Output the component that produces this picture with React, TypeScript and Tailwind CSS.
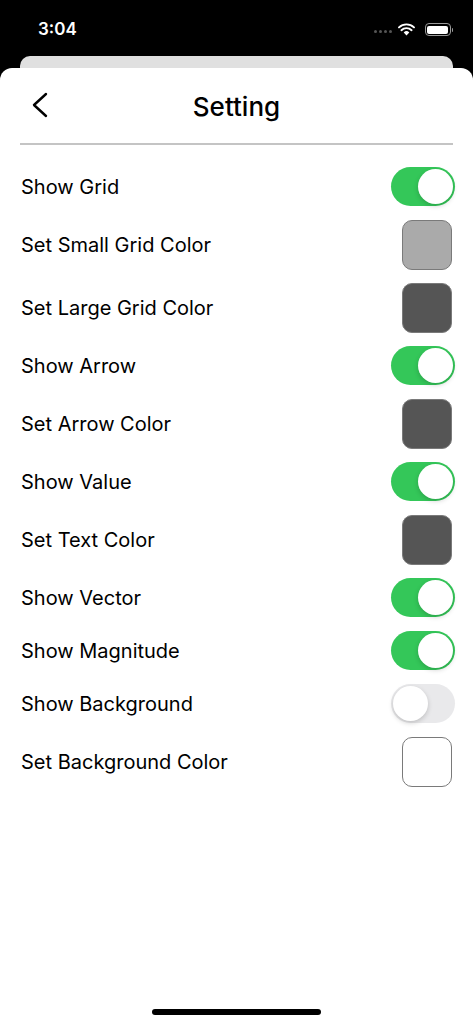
import { useState } from "react";

type Row =
  | { kind: "toggle"; label: string; on: boolean }
  | { kind: "color"; label: string; color: string };

const rows: Row[] = [
  { kind: "toggle", label: "Show Grid", on: true },
  { kind: "color", label: "Set Small Grid Color", color: "bg-[#aaaaaa]" },
  { kind: "color", label: "Set Large Grid Color", color: "bg-[#555555]" },
  { kind: "toggle", label: "Show Arrow", on: true },
  { kind: "color", label: "Set Arrow Color", color: "bg-[#555555]" },
  { kind: "toggle", label: "Show Value", on: true },
  { kind: "color", label: "Set Text Color", color: "bg-[#555555]" },
  { kind: "toggle", label: "Show Vector", on: true },
  { kind: "toggle", label: "Show Magnitude", on: true },
  { kind: "toggle", label: "Show Background", on: false },
  { kind: "color", label: "Set Background Color", color: "bg-white" },
];

const Toggle = ({ on }: { on: boolean }) => {
  const [value, setValue] = useState(on);
  return (
    <button
      onClick={() => setValue(!value)}
      className={`flex h-[39px] w-[64px] items-center rounded-full p-[2px] ${
        value ? "justify-end bg-[#34c759]" : "justify-start bg-[#e9e9eb]"
      }`}
    >
      <span className="h-[35px] w-[35px] rounded-full bg-white shadow-[0_2px_5px_rgba(0,0,0,0.18)]" />
    </button>
  );
};

const StatusBar = () => (
  <div className="flex h-[56px] items-center justify-between bg-black pl-[38px] pr-[20px] pt-[3px]">
    <span className="text-[17px] font-semibold text-white">3:04</span>
    <div className="flex items-center gap-[6px]">
      <div className="flex items-end gap-[2px] pt-[4px]">
        <span className="h-[3px] w-[3px] rounded-full bg-[#555]" />
        <span className="h-[3px] w-[3px] rounded-full bg-[#555]" />
        <span className="h-[3px] w-[3px] rounded-full bg-[#555]" />
        <span className="h-[3px] w-[3px] rounded-full bg-[#555]" />
      </div>
      <svg width="17" height="13" viewBox="0 0 17 13">
        <path d="M8.5 12.5 L5.7 9.4 A4 4 0 0 1 11.3 9.4 Z" fill="white" />
        <path d="M3.4 7.2 A7.3 7.3 0 0 1 13.6 7.2" stroke="white" strokeWidth="1.9" fill="none" strokeLinecap="round" />
        <path d="M1 4.4 A10.8 10.8 0 0 1 16 4.4" stroke="white" strokeWidth="1.9" fill="none" strokeLinecap="round" />
      </svg>
      <div className="ml-[4px] flex items-center gap-[1px]">
        <div className="flex h-[13px] w-[26px] items-center rounded-[4px] border border-[#999] p-[1.5px]">
          <div className="h-full w-full rounded-[2px] bg-white" />
        </div>
        <div className="h-[4px] w-[1.5px] rounded-r bg-[#999]" />
      </div>
    </div>
  </div>
);

export default function App() {
  return (
    <div
      className="relative flex h-[1024px] w-[473px] flex-col overflow-hidden bg-black"
      style={{ fontFamily: "Inter, 'Liberation Sans', sans-serif" }}
    >
      <StatusBar />
      <div className="mx-[20px] h-[20px] rounded-t-[10px] bg-[#e0e0e0]" />
      <div className="-mt-[8px] flex flex-1 flex-col rounded-t-[12px] bg-white">
        <div className="relative flex h-[75px] items-center justify-center">
          <button className="absolute left-[30px] top-[24px]">
            <svg width="20" height="26" viewBox="0 0 20 26">
              <path d="M16 2 L4 13 L16 24" stroke="black" strokeWidth="2.4" fill="none" strokeLinecap="round" strokeLinejoin="round" />
            </svg>
          </button>
          <h1 className="pt-[1px] text-[26px] font-medium text-black">Setting</h1>
        </div>
        <div className="mx-[20px] h-[1.5px] bg-[#c4c4c4]" />
        <div className="flex flex-col gap-[13px] pl-[21px] pr-[18px] pt-[22px]">
          {rows.map((row) => (
            <div
              key={row.label}
              className={`flex items-center justify-between ${row.kind === "toggle" ? "h-[40px]" : "h-[50px]"}`}
            >
              <span className="text-[20px] text-black">{row.label}</span>
              {row.kind === "toggle" ? (
                <Toggle on={row.on} />
              ) : (
                <div className={`mr-[3px] h-[50px] w-[50px] rounded-[10px] border border-[#7a7a7a] ${row.color}`} />
              )}
            </div>
          ))}
        </div>
        <div className="flex-1" />
        <div className="flex justify-center pb-[9px]">
          <div className="h-[6px] w-[169px] rounded-full bg-black" />
        </div>
      </div>
    </div>
  );
}
